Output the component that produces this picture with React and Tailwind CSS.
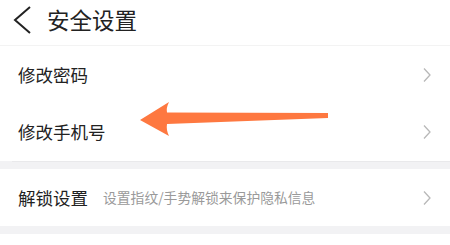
export default function App() {
  const font = { fontFamily: '"Noto Sans CJK SC", "Noto Sans", sans-serif' };

  const Chevron = () => (
    <svg width="10" height="16" viewBox="0 0 10 16" className="shrink-0">
      <polyline points="2,1.5 8,8 2,14.5" fill="none" stroke="#b8b8b8" strokeWidth="1.3" />
    </svg>
  );

  return (
    <div className="w-[450px] h-[245px] bg-white overflow-hidden relative text-[#222]" style={font}>
      <div className="h-[46px] flex items-center border-b border-[#f3f3f3]">
        <svg width="20" height="30" viewBox="0 0 20 30" className="ml-[12px] mb-[6px]">
          <polyline points="18,2 3,15 18,28" fill="none" stroke="#222" strokeWidth="2" />
        </svg>
        <div className="ml-[15px] mb-[6px] text-[22.5px] leading-none">安全设置</div>
      </div>

      <div className="h-[57px] flex items-center justify-between pl-[18px] pr-[18px]">
        <span className="text-[17.5px] leading-none">修改密码</span>
        <Chevron />
      </div>
      <div className="h-[58px] flex items-center justify-between pl-[18px] pr-[18px] pb-[1px]">
        <span className="text-[17.5px] leading-none">修改手机号</span>
        <Chevron />
      </div>

      <div className="h-[8px] bg-[#f2f2f4] relative">
        <div className="absolute top-0 left-[12px] right-0 h-px bg-[#e9e9eb]" />
      </div>

      <div className="h-[57px] flex items-center justify-between pl-[18px] pr-[18px]">
        <div className="flex items-center">
          <span className="text-[17.5px] leading-none">解锁设置</span>
          <span className="ml-[15px] text-[13.8px] leading-none text-[#9a9a9a]">设置指纹/手势解锁来保护隐私信息</span>
        </div>
        <Chevron />
      </div>

      <div className="h-[8px] bg-[#f2f2f4]" />

      <svg className="absolute left-0 top-0 pointer-events-none" width="450" height="245" viewBox="0 0 450 245">
        <path
          d="M140,120 L169,102 Q166,108 167,112.5 L328,113 L328,118 L167,124 Q166,130 169,136 Z"
          fill="#fe7840"
        />
      </svg>
    </div>
  );
}
